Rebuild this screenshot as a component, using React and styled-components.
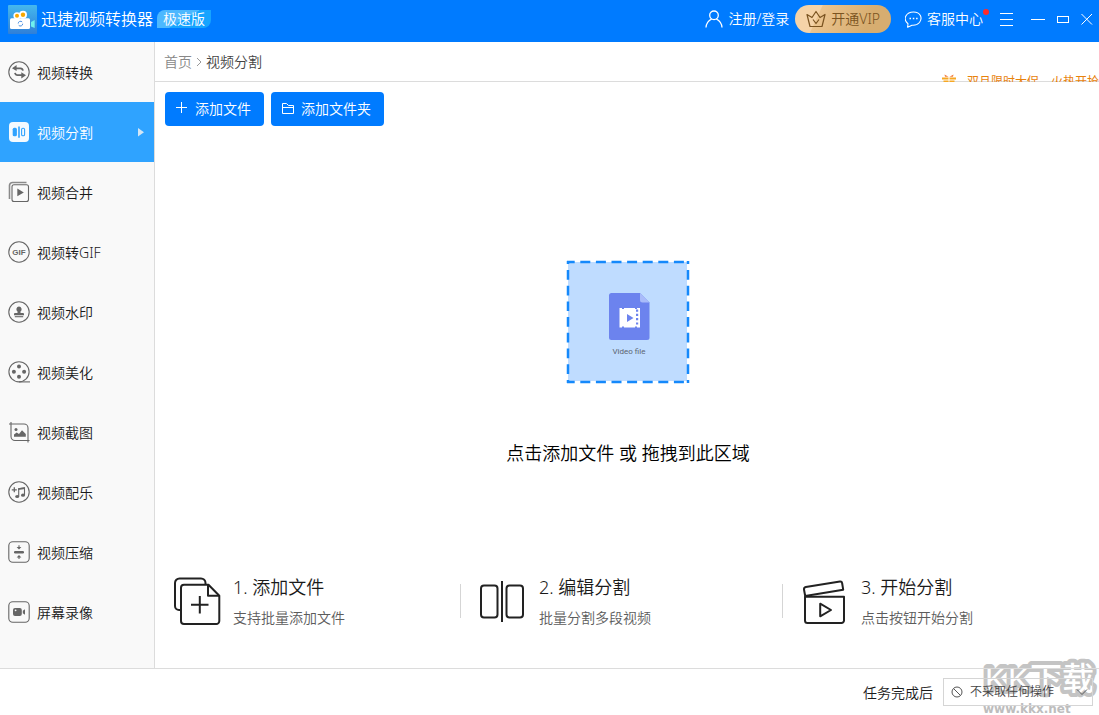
import React from 'react'
import styled, { createGlobalStyle } from 'styled-components'

const GlobalStyle = createGlobalStyle`
  * {
    box-sizing: border-box;
  }

  body {
    margin: 0;
    font-family: "Noto Sans", "Noto Sans CJK SC", sans-serif;
    font-size: 14px;
    font-weight: 350;
    line-height: 20px;
    color: #1a1a1a;
    background: #fff;
  }

  button, select {
    font: inherit;
    color: inherit;
    border: none;
    background: none;
    padding: 0;
    cursor: pointer;
  }

  a {
    color: inherit;
    text-decoration: none;
  }

  svg {
    display: block;
    flex: none;
  }
`

const Page = styled.div`
  position: relative;
  min-height: 100vh;
  display: grid;
  grid-template-rows: auto 1fr auto;
  overflow: hidden;
`

const Header = styled.header`
  display: flex;
  align-items: center;
  justify-content: space-between;
  height: 42px;
  padding: 0 6px 4px 8px;
  color: #fff;
  background: #007bff;
`

const Brand = styled.div`
  display: flex;
  align-items: center;
  gap: 4px;
`

const Title = styled.h1`
  margin: 0;
  font-size: 16px;
  font-weight: inherit;
  line-height: 24px;
`

const Edition = styled.span`
  padding: 0 6px;
  height: 18px;
  line-height: 18px;
  border-radius: 8px 0 8px 0;
  background: linear-gradient(150deg, #4cb8ff 50%, #16a4ff 51%);
`

const HeaderRight = styled.div`
  display: flex;
  align-items: center;
`

const HeaderButton = styled.button`
  position: relative;
  display: flex;
  align-items: center;
  gap: 5px;
`

const VipButton = styled(HeaderButton)`
  height: 28px;
  margin: 0 14px 0 6px;
  padding: 0 11px;
  border-radius: 14px;
  color: #7a5320;
  background: linear-gradient(115deg, #f5d3a8 25%, #ebc48f 26%, #d7ad70 75%);
`

const RedDot = styled.i`
  position: absolute;
  top: 0;
  right: -6px;
  width: 6px;
  height: 6px;
  border-radius: 50%;
  background: #ff2a2a;
`

const WindowButtons = styled.div`
  display: flex;
  align-items: center;
  gap: 12px;
  margin-left: 17px;

  button:first-child {
    margin-right: 6px;
  }
`

const Body = styled.div`
  display: flex;
`

const Sidebar = styled.nav`
  flex: none;
  width: 155px;
  border-right: 1px solid #dcdcdc;
  background: #f9f9f9;
`

const MenuItem = styled.a`
  display: flex;
  align-items: center;
  gap: 7px;
  height: 60px;
  padding: 0 10px 0 8px;
  color: ${(props) => (props.$active ? '#fff' : '#1a1a1a')};
  background: ${(props) => (props.$active ? '#2fa3ff' : 'transparent')};

  &:hover {
    background: ${(props) => (props.$active ? '#2fa3ff' : '#f0f0f0')};
  }
`

const MenuText = styled.span`
  flex: 1;
  padding-top: 2px;
`

const Content = styled.main`
  flex: 1;
  display: flex;
  flex-direction: column;
`

const TopBar = styled.div`
  display: flex;
  justify-content: space-between;
  height: 40px;
  padding-left: 9px;
  border-bottom: 1px solid #dcdcdc;
`

const Breadcrumb = styled.div`
  display: flex;
  align-items: center;
  gap: 4px;
  color: #444;

  a {
    color: #888;
  }
`

const Promo = styled.a`
  display: flex;
  align-items: flex-start;
  gap: 10px;
  height: 40px;
  padding-top: 30px;
  overflow: hidden;
  font-size: 12px;
  font-weight: 400;
  color: #e8820c;
  white-space: nowrap;
`

const Toolbar = styled.div`
  display: flex;
  gap: 7px;
  padding: 10px 10px 0;
`

const AddButton = styled.button`
  display: flex;
  align-items: center;
  gap: 6px;
  height: 34px;
  padding: 0 13px 0 10px;
  border-radius: 4px;
  color: #fff;
  background: #007bff;

  &:hover {
    background: #2490ff;
  }
`

const DropZone = styled.button`
  flex: 1;
  display: flex;
  flex-direction: column;
  align-items: center;
  justify-content: center;
  gap: 56px;
  padding: 26px 0 0 2px;
  font-size: 18px;
  line-height: 27px;
  color: #000;
`

const Steps = styled.ol`
  display: grid;
  grid-template-columns: 305fr 322fr 317fr;
  align-items: center;
  margin: 0;
  padding: 0 0 40px;
  list-style: none;
`

const Step = styled.li`
  display: flex;
  align-items: center;
  gap: 11px;
  padding-left: 19px;

  & + &::before {
    content: "";
    width: 1px;
    height: 34px;
    margin: 0 8px 0 -19px;
    background: #d5d5d5;
  }
`

const StepTitle = styled.h2`
  margin: 0 0 7px;
  font-size: 18px;
  font-weight: inherit;
  line-height: 27px;
`

const StepText = styled.p`
  margin: 0;
  color: #5c5c5c;
`

const Footer = styled.footer`
  position: relative;
  z-index: 1;
  display: flex;
  align-items: center;
  justify-content: flex-end;
  gap: 10px;
  height: 47px;
  padding: 0 6px 0 0;
  border-top: 1px solid #dcdcdc;

  label {
    padding-top: 2px;
  }
`

const SelectBox = styled.div`
  display: grid;
  align-items: center;
  width: 150px;
  height: 28px;

  > * {
    grid-area: 1 / 1;
  }

  svg {
    pointer-events: none;
    margin-left: 8px;
  }

  svg:last-child {
    justify-self: end;
    margin-right: 5px;
  }
`

const Select = styled.select`
  appearance: none;
  height: 28px;
  padding: 0 26px;
  border: 1px solid #d5d5d5;
  font-size: 12px;
  color: #444;
`

const Watermark = styled.div`
  position: absolute;
  right: 0;
  bottom: 0;
  display: flex;
  flex-direction: column;
  pointer-events: none;
`

const WatermarkUrl = styled.span`
  padding-left: 2px;
  font-family: "DejaVu Sans", sans-serif;
  font-size: 12px;
  font-weight: 700;
  line-height: 12px;
  color: #bdbdbd;
`

const Icon = ({ w = 22, h = w, children, ...rest }) => (
  <svg width={w} height={h} viewBox={`0 0 ${w} ${h}`} fill="none" stroke="currentColor" aria-hidden="true" {...rest}>
    {children}
  </svg>
)

const GRAY = '#666'

const SideIcon = ({ children }) => (
  <Icon stroke={GRAY} strokeWidth="1.1">{children}</Icon>
)

const Ring = () => <circle cx="11" cy="11" r="10.2" />
const RoundBox = () => <rect x="0.8" y="0.8" width="20.4" height="20.4" rx="4" />

const menu = [
  {
    text: '视频转换',
    icon: (
      <SideIcon>
        <Ring />
        <path d="M8 7.300H12.500q2 0 2.500 2.300M14 14.200H9.500q-2 0-2.500-2.300" strokeWidth="1.800" />
        <path d="M4 7.300L8.600 3.900V10.100zM18 14.200L13.300 17.500V11.200z" fill={GRAY} stroke="none" />
      </SideIcon>
    ),
  },
  {
    text: '视频分割',
    active: true,
    icon: (
      <Icon>
        <rect x="1" y="1" width="20" height="20" rx="4" fill="#f4faff" stroke="none" />
        <rect x="4.700" y="6.700" width="4.200" height="8.600" rx="1.600" fill="#2fa3ff" stroke="none" />
        <path d="M11 5.500V16.700" stroke="#2fa3ff" strokeWidth="1.600" />
        <rect x="13.600" y="7.200" width="3" height="7.600" rx="1.300" stroke="#2fa3ff" strokeWidth="1.100" />
      </Icon>
    ),
  },
  {
    text: '视频合并',
    icon: (
      <SideIcon>
        <path d="M18.500 1.500H4.500a3 3 0 0 0-3 3V18" stroke="#8a8a8a" strokeWidth="1.600" />
        <rect x="4" y="3.800" width="16.500" height="16.700" rx="2" />
        <path d="M9.300 7.500V15.300L15.800 11.400z" fill={GRAY} stroke="none" />
      </SideIcon>
    ),
  },
  {
    text: '视频转GIF',
    icon: (
      <SideIcon>
        <Ring />
        <text x="11" y="14" textAnchor="middle" fontFamily="Liberation Sans, sans-serif" fontSize="8" fontWeight="700" fill={GRAY} stroke="none">GIF</text>
      </SideIcon>
    ),
  },
  {
    text: '视频水印',
    icon: (
      <SideIcon>
        <Ring />
        <path d="M11 5.600a2.700 2.700 0 0 1 1.500 4.900V12H15a1 1 0 0 1 1 1V14.200H6V13a1 1 0 0 1 1-1H9.500V10.500A2.700 2.700 0 0 1 11 5.600z" fill={GRAY} stroke="none" />
        <path d="M6.800 15.700H15.200" />
      </SideIcon>
    ),
  },
  {
    text: '视频美化',
    icon: (
      <SideIcon>
        <circle cx="11" cy="10.800" r="10.100" />
        <path d="M11 20.900H22" />
        <g fill={GRAY} stroke="none">
          <circle cx="11" cy="5.500" r="2" />
          <circle cx="5.900" cy="10.700" r="2" />
          <circle cx="16.100" cy="10.700" r="2" />
          <circle cx="11" cy="15.700" r="2" />
        </g>
      </SideIcon>
    ),
  },
  {
    text: '视频截图',
    icon: (
      <SideIcon>
        <path d="M3 1V15.500a4 4 0 0 0 4 4H21.500M1 3H16a4 4 0 0 1 4 4V21.500" />
        <circle cx="8" cy="8.400" r="1.500" fill={GRAY} stroke="none" />
        <path d="M6 15.800V13.500L8.700 11.500L11 13L14 9.300L17.800 13V15.800z" fill={GRAY} stroke="none" />
      </SideIcon>
    ),
  },
  {
    text: '视频配乐',
    icon: (
      <SideIcon>
        <Ring />
        <path d="M6.300 6.300V11.300M3.800 8.800H8.800" strokeWidth="1.300" />
        <path d="M10.700 15.300V7.800L16.500 6.800V14" />
        <path d="M10.200 9V7.300L17 6.200V8z" fill={GRAY} stroke="none" />
        <ellipse cx="9.200" cy="15.500" rx="2" ry="1.600" fill={GRAY} stroke="none" />
        <ellipse cx="15" cy="14.200" rx="2" ry="1.600" fill={GRAY} stroke="none" />
      </SideIcon>
    ),
  },
  {
    text: '视频压缩',
    icon: (
      <SideIcon>
        <RoundBox />
        <rect x="6" y="9.900" width="10" height="2.600" rx="1.200" fill={GRAY} stroke="none" />
        <path d="M11 4.300V6.500M11 18V16" />
        <path d="M8.600 5.900H13.400L11 8.400zM8.600 16.400H13.400L11 13.900z" fill={GRAY} stroke="none" />
      </SideIcon>
    ),
  },
  {
    text: '屏幕录像',
    icon: (
      <SideIcon>
        <RoundBox />
        <rect x="5" y="7" width="8.800" height="8" rx="2" fill={GRAY} stroke="none" />
        <path d="M14.800 9.800L17 8.300V13.700L14.800 12.200z" fill={GRAY} stroke="none" />
        <circle cx="7.600" cy="9.300" r="0.900" fill="#f9f9f9" stroke="none" />
      </SideIcon>
    ),
  },
]

const steps = [
  {
    title: '1. 添加文件',
    text: '支持批量添加文件',
    icon: (
      <Icon w={48} stroke="#222" strokeWidth="2" strokeLinejoin="round">
        <path d="M6.700 33H5a4 4 0 0 1-4-4V6a4.500 4.500 0 0 1 4.500-4.500H27a4.500 4.500 0 0 1 4.500 4.500V7.500" />
        <path d="M10 7.700H34.500L45.300 18.700V44a3 3 0 0 1-3 3H10a3 3 0 0 1-3-3V10.700a3 3 0 0 1 3-3z" />
        <path d="M34 8V18.700H45M25.800 19V36.500M17 27.700H34.500" />
      </Icon>
    ),
  },
  {
    title: '2. 编辑分割',
    text: '批量分割多段视频',
    icon: (
      <Icon w={48} stroke="#222" strokeWidth="2">
        <rect x="1" y="8.500" width="16.500" height="32" rx="3" />
        <path d="M22 4V45" />
        <rect x="26.500" y="8.500" width="16.500" height="32" rx="3" />
      </Icon>
    ),
  },
  {
    title: '3. 开始分割',
    text: '点击按钮开始分割',
    icon: (
      <Icon w={48} stroke="#222" strokeWidth="2" strokeLinejoin="round">
        <path d="M3 19.700H42V43.500a2.500 2.500 0 0 1-2.500 2.500H5.500a2.500 2.500 0 0 1-2.500-2.500z" />
        <path d="M3.200 19L2 12.500Q1.800 10.500 3.800 10.100L38 4.500Q39.800 4.300 40.100 6L41.200 12.700z" />
        <path d="M18.200 26.700V39.300L29 33z" />
      </Icon>
    ),
  },
]

const Logo = () => (
  <Icon w={29} stroke="none">
    <defs>
      <linearGradient id="logoBg" x1="0" y1="0" x2="0" y2="1">
        <stop offset="0" stopColor="#45b8ee" />
        <stop offset="1" stopColor="#2f7fd8" />
      </linearGradient>
    </defs>
    <rect width="29" height="29" rx="1" fill="url(#logoBg)" />
    <circle cx="9" cy="10.800" r="3.600" fill="#fff" />
    <circle cx="15" cy="9.800" r="4" fill="#fff" />
    <circle cx="9" cy="10.800" r="2" fill="#f9a800" />
    <circle cx="15" cy="9.800" r="2.200" fill="#f9a800" />
    <rect x="2" y="13.300" width="20" height="10.700" rx="1.500" fill="#fff" />
    <path d="M23 17L26.700 15V23L23 21.500z" fill="#6ff0ee" />
    <path d="M10.200 18.500a2.300 2.300 0 0 1 4-1.500M14.700 18.700a2.300 2.300 0 0 1-4 1.600" stroke="#4a8fe0" strokeWidth="1" />
  </Icon>
)

const VideoFile = () => (
  <Icon w={124} stroke="none">
    <rect x="2" y="2" width="119" height="119" fill="#bfdcff" />
    <g stroke="#1589fb" strokeWidth="2.500">
      <path d="M1 2H123M1 122H123" strokeDasharray="10 5.600" strokeDashoffset="2.300" />
      <path d="M2 1V123M122 1V123" strokeDasharray="9.700 6" strokeDashoffset="6.700" />
    </g>
    <path d="M45.500 33H74L83.500 42.500V77.500a2.500 2.500 0 0 1-2.500 2.500H45.500a2.500 2.500 0 0 1-2.500-2.500V35.500a2.500 2.500 0 0 1 2.500-2.500z" fill="#6c83ee" />
    <path d="M74 33L83.500 42.500H76.500a2.500 2.500 0 0 1-2.500-2.500z" fill="#a9bbfa" />
    <path d="M53.500 48H74V67.500H53.500z" fill="#fff" />
    <path d="M61 54V62L67.500 58zM70 49.500h2.200v2.200h-2.200zM70 53.800h2.200v2.200h-2.200zM70 58.100h2.200v2.200h-2.200zM70 62.400h2.200v2.200h-2.200zM56 47.500h2v1.600h-2zM69 47.500h2v1.600h-2zM56 66.500h2v1.600h-2zM69 66.500h2v1.600h-2z" fill="#6c83ee" />
    <text x="63" y="94" textAnchor="middle" fontFamily="Roboto, sans-serif" fontSize="8" fontWeight="400" fill="#5c6470">Video file</text>
  </Icon>
)

const WatermarkLogo = () => (
  <Icon w={118} h={53} fill="#fff" stroke="#c4c4c4" strokeWidth="8" strokeLinejoin="round" fontSize="32" paintOrder="stroke">
    <text x="4" y="40" fontFamily="Liberation Sans, sans-serif">K</text>
    <text x="27" y="40" fontFamily="Liberation Sans, sans-serif">K</text>
    <text x="49" y="40" fontFamily="Noto Sans CJK SC, sans-serif" fontWeight="500">下载</text>
  </Icon>
)

export default class App extends React.Component {
  render() {
    const menuItems = menu.map((item) => (
      <MenuItem key={item.text} href="#" $active={item.active}>
        {item.icon}
        <MenuText>{item.text}</MenuText>
        {item.active && (
          <Icon w={6} h={10} stroke="none">
            <path d="M0 1V9.500L6 5.200z" fill="#d3e6f5" />
          </Icon>
        )}
      </MenuItem>
    ))

    const stepItems = steps.map((step) => (
      <Step key={step.title}>
        {step.icon}
        <div>
          <StepTitle>{step.title}</StepTitle>
          <StepText>{step.text}</StepText>
        </div>
      </Step>
    ))

    return (
      <Page>
        <GlobalStyle />
        <Header>
          <Brand>
            <Logo />
            <Title>迅捷视频转换器</Title>
            <Edition>极速版</Edition>
          </Brand>
          <HeaderRight>
            <HeaderButton>
              <Icon w={18} strokeWidth="1.300">
                <circle cx="9" cy="5.300" r="4.300" />
                <path d="M1 17.500C1.300 12.800 4 10.300 6.700 9M17 17.500C16.700 12.800 14 10.300 11.300 9" />
              </Icon>
              注册/登录
            </HeaderButton>
            <VipButton>
              <Icon w={20} h={18} strokeWidth="1.200" strokeLinejoin="round">
                <path d="M4 16.500L1 4.500L6 7.500L10 1.500L14 7.500L19 4.500L16 16.500z" />
                <path d="M7 9.500L10 13.500L13 9.500" />
              </Icon>
              开通VIP
            </VipButton>
            <HeaderButton>
              <Icon w={17} strokeWidth="1.100">
                <path d="M3 12.700C-3 7.800 1.500 1 8.500 1S17.800 7 14.500 11.500C12.300 14 9.500 14.400 7 14.200L2.600 16.200z" strokeLinejoin="round" />
                <path d="M4.500 7.500H6M7.800 7.500H9.300M11.100 7.500H12.600" strokeWidth="1.500" />
              </Icon>
              客服中心
              <RedDot />
            </HeaderButton>
            <WindowButtons>
              <button aria-label="菜单">
                <Icon w={13} h={14}><path d="M0 1.500H13M0 7.500H13M0 13.500H13" /></Icon>
              </button>
              <button aria-label="最小化">
                <Icon w={14} h={14}><path d="M0 7.500H14" /></Icon>
              </button>
              <button aria-label="最大化">
                <Icon w={12} h={14}><rect x="0.500" y="4.500" width="11" height="6" /></Icon>
              </button>
              <button aria-label="关闭">
                <Icon w={12} h={14}><path d="M0.500 2L11 12.500M11 2L0.500 12.500" /></Icon>
              </button>
            </WindowButtons>
          </HeaderRight>
        </Header>
        <Body>
          <Sidebar>{menuItems}</Sidebar>
          <Content>
            <TopBar>
              <Breadcrumb>
                <a href="#">首页</a>
                <Icon w={6} h={10} stroke="#999"><path d="M1 1L5 5L1 9" /></Icon>
                <span>视频分割</span>
              </Breadcrumb>
              <Promo href="#">
                <Icon w={16} h={16} stroke="none">
                  <path d="M3.500 2.500L7.500 4.800H4zM12.500 2.500L8.500 4.800H12z" fill="#f2793a" />
                  <path d="M1 5.500H7.500V7.500H1zM8.500 5.500H15V7.500H8.500zM2.500 8.500H7.500V15H2.500zM8.500 8.500H13.500V15H8.500z" fill="#f7a823" />
                </Icon>
                双旦限时大促，火热开抢
              </Promo>
            </TopBar>
            <Toolbar>
              <AddButton>
                <Icon w={14}><path d="M6.500 0V11M1 5.500H12" /></Icon>
                添加文件
              </AddButton>
              <AddButton>
                <Icon w={14}><path d="M1.500 11.500V1.500H5.500L7.500 3.500H12.500V11.500zM1.500 5.500H12.500" /></Icon>
                添加文件夹
              </AddButton>
            </Toolbar>
            <DropZone>
              <VideoFile />
              <span>点击添加文件 或 拖拽到此区域</span>
            </DropZone>
            <Steps>{stepItems}</Steps>
          </Content>
        </Body>
        <Footer>
          <label htmlFor="afterTask">任务完成后</label>
          <SelectBox>
            <Select id="afterTask">
              <option>不采取任何操作</option>
            </Select>
            <Icon w={12} stroke="#555">
              <circle cx="6" cy="6" r="5" />
              <path d="M2.500 2.500L9.500 9.500" />
            </Icon>
            <Icon w={12} h={8} stroke="#555"><path d="M1 1.500L6 6.500L11 1.500" /></Icon>
          </SelectBox>
        </Footer>
        <Watermark>
          <WatermarkLogo />
          <WatermarkUrl>www.kkx.net</WatermarkUrl>
        </Watermark>
      </Page>
    )
  }
}
